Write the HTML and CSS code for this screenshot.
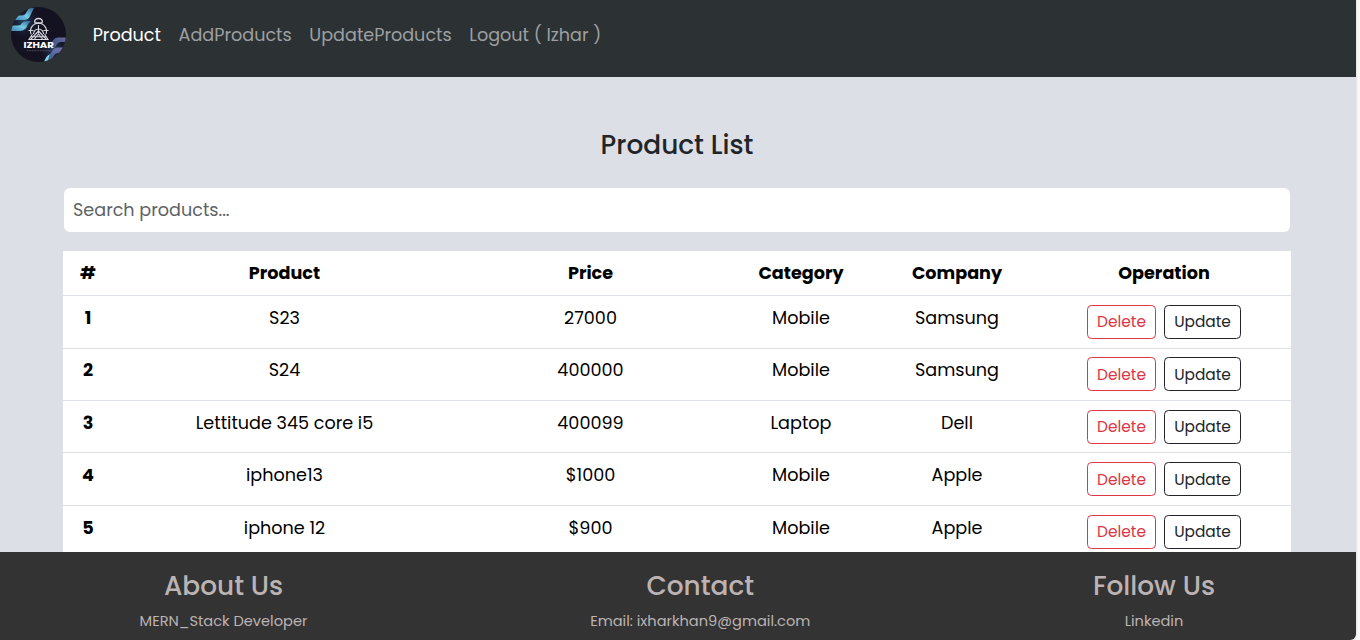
FILE: index.html
```html
<!DOCTYPE html>
<html lang="en">
<head>
<meta charset="utf-8">
<title>Product List</title>
<link rel="stylesheet" href="styles.css">
</head>
<body>
<div class="page">
  <nav class="navbar">
    <svg class="logo" viewBox="0 0 56 56" role="img" aria-label="Izhar">
      <defs>
        <clipPath id="disc"><circle cx="27.500" cy="27.500" r="27.500"/></clipPath>
        <linearGradient id="aqua" x1="0" y1="1" x2="1" y2="0"><stop offset="0" stop-color="#3f7fb4"/><stop offset=".5" stop-color="#74cbe2"/><stop offset="1" stop-color="#35608e"/></linearGradient>
        <linearGradient id="violet" x1="0" y1="1" x2="1" y2="0"><stop offset="0" stop-color="#305b8c"/><stop offset="1" stop-color="#8277b4"/></linearGradient>
        <radialGradient id="glow"><stop offset="0" stop-color="#244a70"/><stop offset="1" stop-color="#141221" stop-opacity="0"/></radialGradient>
      </defs>
      <g clip-path="url(#disc)">
        <rect width="56" height="56" fill="#141221"/>
        <circle cx="13" cy="15" r="17" fill="url(#glow)"/>
        <circle cx="43" cy="43" r="15" fill="url(#glow)"/>
        <path d="M2 8.500H11Q14 8.500 15.500 5L18 1H23L19 9Q17.500 13 13 13H2Z" fill="url(#aqua)"/>
        <path d="M0 18.500H7Q10 18.500 11 16Q12.500 14 17 14H20L17 17Q15 24 9 24H0Z" fill="url(#aqua)"/>
        <path d="M40 38Q42 30.500 47 30.500H56V35H50Q47 35 45.500 38Q44 42 40 42Z" fill="url(#violet)" opacity=".85"/>
        <path d="M38 50Q41 41 46 40.500H56V46H47Q44 46 42 50L39 56H35Z" fill="url(#violet)"/>
        <path d="M33 56Q34 50 39 47L36 56Z" fill="#80d4e8"/>
      </g>
      <g fill="none" stroke="#d6d8df" stroke-width="1.100">
        <path d="M24 16C21.500 10 33.500 10 31 16Z" stroke-width="1.400"/>
        <path d="M20 27a8 8 0 1 1 15 0M22.500 27a5 5 0 1 1 10 0M17.500 23.500h5M32.500 23.500h5M27.500 18v8"/>
        <path d="M21.500 27L18 32.500H37L33.500 27M27.500 24L20 32M27.500 24L35 32M23.500 32L27.500 27L31.500 32M20.500 29.800H34.500"/>
      </g>
      <text class="logo-name" x="12.400" y="41" textLength="30.500" lengthAdjust="spacingAndGlyphs">IZHAR</text>
      <path d="M16 43.700H40" stroke="#6c6d7d" stroke-width=".7" stroke-dasharray="1 .6"/>
    </svg>
    <a class="link active">Product</a>
    <a class="link">AddProducts</a>
    <a class="link">UpdateProducts</a>
    <a class="link">Logout ( Izhar )</a>
  </nav>
  <main class="content">
    <h1 class="title">Product List</h1>
    <div class="search">Search products...</div>
    <table class="products">
      <colgroup><col class="c-num"><col class="c-product"><col class="c-price"><col class="c-category"><col class="c-company"><col class="c-op"></colgroup>
      <thead><tr><th>#</th><th>Product</th><th>Price</th><th>Category</th><th>Company</th><th>Operation</th></tr></thead>
      <tbody>
        <tr class="first"><th>1</th><td>S23</td><td>27000</td><td>Mobile</td><td>Samsung</td><td><div class="actions"><button class="btn delete">Delete</button><button class="btn update">Update</button></div></td></tr>
        <tr class="second"><th>2</th><td>S24</td><td>400000</td><td>Mobile</td><td>Samsung</td><td><div class="actions"><button class="btn delete">Delete</button><button class="btn update">Update</button></div></td></tr>
        <tr class="third"><th>3</th><td>Lettitude 345 core i5</td><td>400099</td><td>Laptop</td><td>Dell</td><td><div class="actions"><button class="btn delete">Delete</button><button class="btn update">Update</button></div></td></tr>
        <tr><th>4</th><td>iphone13</td><td>$1000</td><td>Mobile</td><td>Apple</td><td><div class="actions"><button class="btn delete">Delete</button><button class="btn update">Update</button></div></td></tr>
        <tr><th>5</th><td>iphone 12</td><td>$900</td><td>Mobile</td><td>Apple</td><td><div class="actions"><button class="btn delete">Delete</button><button class="btn update">Update</button></div></td></tr>
      </tbody>
    </table>
  </main>
  <footer class="footer">
    <section class="about"><h2>About Us</h2><p>MERN_Stack Developer</p></section>
    <section class="contact"><h2>Contact</h2><p>Email: ixharkhan9@gmail.com</p></section>
    <section class="follow"><h2>Follow Us</h2><p>Linkedin</p></section>
  </footer>
</div>
</body>
</html>
```
FILE: styles.css
```css
* { box-sizing: border-box; }
body { margin: 0; height: 640px; overflow: hidden; background: #f8f8f8; font-family: Poppins, Inter, sans-serif; font-size: 17.6px; }
.page { width: 1356px; height: 640px; display: flex; flex-direction: column; overflow: hidden; background: #dddfe7; border-bottom-right-radius: 6px; box-shadow: 0 0 2px #bbb; }
.navbar { height: 77px; flex: none; display: flex; align-items: flex-start; padding: 7px 11px; background: #2c3134; }
.logo { width: 56px; height: 56px; margin-right: 16.8px; }
.logo-name { font: 700 9px Poppins, Inter, sans-serif; fill: #fff; }
.link { line-height: 26px; padding: 15px 8.85px 0; color: #9da0a2; white-space: nowrap; }
.link.active { color: #fff; }
.content { flex: 1; min-height: 0; overflow: hidden; padding: 51px 65px 0 63px; }
.title { margin: 0 0 26px; text-align: center; font-size: 26.4px; line-height: 34px; font-weight: 500; color: #212529; }
.search { margin: 0 1px 19px; height: 44px; padding: 0 9px; border-radius: 6px; background: #fff; color: #5e6266; line-height: 44px; }
.products { width: 1228px; table-layout: fixed; border-collapse: separate; border-spacing: 0; background: #fff; color: #000; text-align: center; }
.products th, .products td { padding: 9px 0 0; height: 52.4px; vertical-align: top; line-height: 26px; border-bottom: 1px solid #dee2e6; font-weight: 400; }
.products th { font-weight: 700; }
.products thead th { height: 45px; }
.products .first th, .products .first td { height: 53px; }
.products .second th, .products .second td { padding-top: 8.4px; height: 52px; }
.c-num { width: 50px; } .c-product { width: 343px; } .c-price { width: 269px; } .c-category { width: 152px; } .c-company { width: 160px; } .c-op { width: 254px; }
.actions { display: flex; justify-content: center; gap: 8px; }
.btn { height: 34px; padding: 0; border: 1px solid; border-radius: 4.4px; background: #fff; font: 400 15.4px Poppins, Inter, sans-serif; }
.first .btn, .third .btn { padding-bottom: 1px; }
.delete { width: 69px; color: #dc3545; }
.update { width: 77px; color: #212529; }
.footer { height: 88px; flex: none; display: flex; justify-content: space-between; padding: 18px 140.5px 0 139px; background: #333; color: #bcb4b4; text-align: center; white-space: nowrap; }
.footer h2 { margin: 0 0 8px; font-size: 26.4px; line-height: 32px; font-weight: 500; }
.footer p { margin: 0; font-size: 14.6px; line-height: 22px; }
.about { width: 169px; } .contact { width: 221px; } .follow { width: 123px; }
```
